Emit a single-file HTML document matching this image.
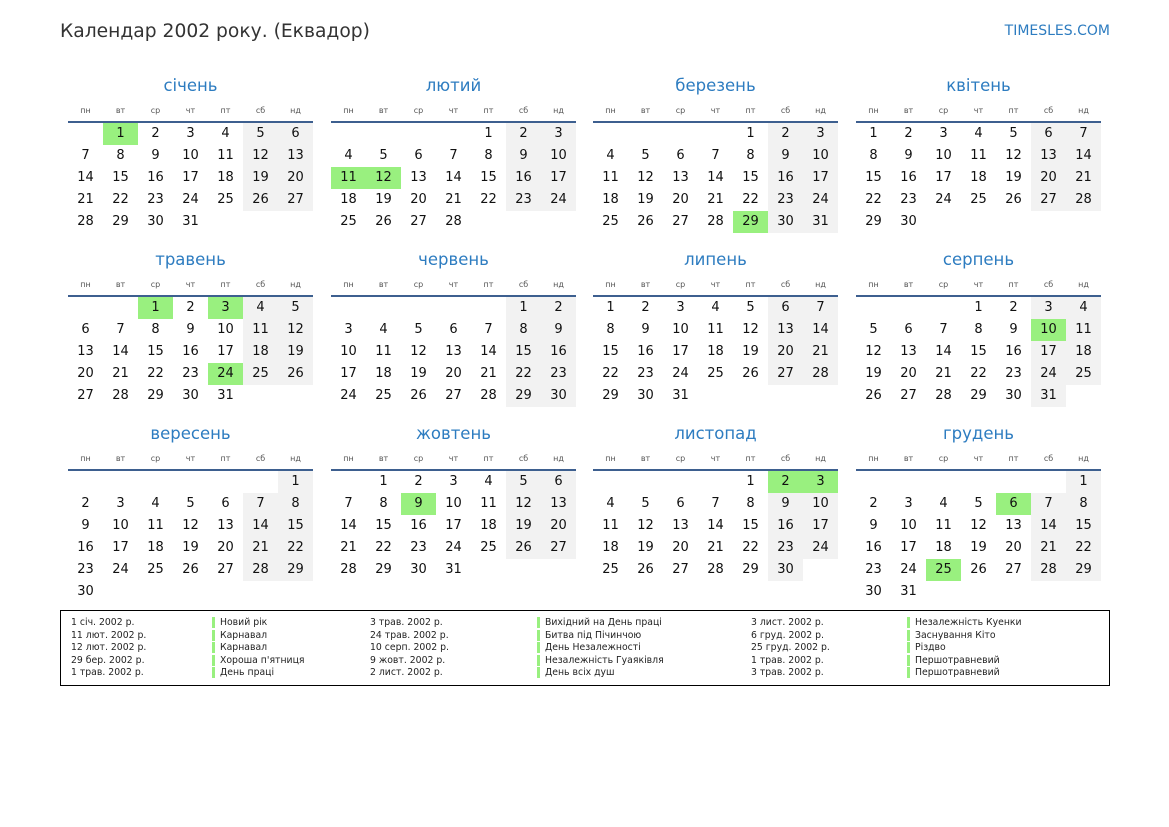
<!DOCTYPE html><html><head><meta charset="utf-8"><style>
body{margin:0;width:1169px;height:827px;background:#fff;font-family:"DejaVu Sans","Liberation Sans",sans-serif;position:relative;overflow:hidden}
.t{position:absolute;left:60px;top:21px;font-size:18.7px;color:#333}
.w{position:absolute;right:59px;top:23px;font-size:14px;color:#2d7cc0}
.m{position:absolute;width:245px}
.m h2{margin:0;height:30px;line-height:30px;text-align:center;font-weight:normal;font-size:16.5px;color:#2d7cc0}
.hd{display:grid;grid-template-columns:repeat(7,35px);height:20px;line-height:20px;font-size:8px;color:#555;text-align:center;border-bottom:2px solid #3d5f8f}
.g{display:grid;grid-template-columns:repeat(7,35px);grid-auto-rows:22px}
.g i{font-style:normal;font-size:13px;line-height:22px;text-align:center;color:#111}
.o0 i:nth-child(7n+6),.o0 i:nth-child(7n+7),.o1 i:nth-child(7n+5),.o1 i:nth-child(7n+6),.o2 i:nth-child(7n+4),.o2 i:nth-child(7n+5),.o3 i:nth-child(7n+3),.o3 i:nth-child(7n+4),.o4 i:nth-child(7n+2),.o4 i:nth-child(7n+3),.o5 i:nth-child(7n+1),.o5 i:nth-child(7n+2),.o6 i:nth-child(7n+7),.o6 i:nth-child(7n+1){background:#f2f2f2}
.g i.h{background:#99f07f!important}
.o1 i:first-child{grid-column-start:2}.o2 i:first-child{grid-column-start:3}.o3 i:first-child{grid-column-start:4}.o4 i:first-child{grid-column-start:5}.o5 i:first-child{grid-column-start:6}.o6 i:first-child{grid-column-start:7}
.lg{position:absolute;left:60px;top:610px;width:1048px;height:74px;border:1px solid #000;font-size:9.3px;color:#222}
.lg div{position:absolute;top:6px;line-height:12.6px;white-space:nowrap}
.b span{display:block;border-left:3px solid #99f07f;padding-left:5px;height:11px;line-height:11px;margin-bottom:1.6px}
</style></head><body>
<div class="t">Календар 2002 року. (Еквадор)</div>
<div class="w">TIMESLES.COM</div>

<div class="m" style="left:68px;top:71px"><h2>січень</h2><div class="hd"><span>пн</span><span>вт</span><span>ср</span><span>чт</span><span>пт</span><span>сб</span><span>нд</span></div>
<div class="g o1"><i class="h">1</i><i>2</i><i>3</i><i>4</i><i>5</i><i>6</i><i>7</i><i>8</i><i>9</i><i>10</i><i>11</i><i>12</i><i>13</i><i>14</i><i>15</i><i>16</i><i>17</i><i>18</i><i>19</i><i>20</i><i>21</i><i>22</i><i>23</i><i>24</i><i>25</i><i>26</i><i>27</i><i>28</i><i>29</i><i>30</i><i>31</i></div></div>

<div class="m" style="left:331px;top:71px"><h2>лютий</h2><div class="hd"><span>пн</span><span>вт</span><span>ср</span><span>чт</span><span>пт</span><span>сб</span><span>нд</span></div>
<div class="g o4"><i>1</i><i>2</i><i>3</i><i>4</i><i>5</i><i>6</i><i>7</i><i>8</i><i>9</i><i>10</i><i class="h">11</i><i class="h">12</i><i>13</i><i>14</i><i>15</i><i>16</i><i>17</i><i>18</i><i>19</i><i>20</i><i>21</i><i>22</i><i>23</i><i>24</i><i>25</i><i>26</i><i>27</i><i>28</i></div></div>

<div class="m" style="left:593px;top:71px"><h2>березень</h2><div class="hd"><span>пн</span><span>вт</span><span>ср</span><span>чт</span><span>пт</span><span>сб</span><span>нд</span></div>
<div class="g o4"><i>1</i><i>2</i><i>3</i><i>4</i><i>5</i><i>6</i><i>7</i><i>8</i><i>9</i><i>10</i><i>11</i><i>12</i><i>13</i><i>14</i><i>15</i><i>16</i><i>17</i><i>18</i><i>19</i><i>20</i><i>21</i><i>22</i><i>23</i><i>24</i><i>25</i><i>26</i><i>27</i><i>28</i><i class="h">29</i><i>30</i><i>31</i></div></div>

<div class="m" style="left:856px;top:71px"><h2>квітень</h2><div class="hd"><span>пн</span><span>вт</span><span>ср</span><span>чт</span><span>пт</span><span>сб</span><span>нд</span></div>
<div class="g o0"><i>1</i><i>2</i><i>3</i><i>4</i><i>5</i><i>6</i><i>7</i><i>8</i><i>9</i><i>10</i><i>11</i><i>12</i><i>13</i><i>14</i><i>15</i><i>16</i><i>17</i><i>18</i><i>19</i><i>20</i><i>21</i><i>22</i><i>23</i><i>24</i><i>25</i><i>26</i><i>27</i><i>28</i><i>29</i><i>30</i></div></div>

<div class="m" style="left:68px;top:245px"><h2>травень</h2><div class="hd"><span>пн</span><span>вт</span><span>ср</span><span>чт</span><span>пт</span><span>сб</span><span>нд</span></div>
<div class="g o2"><i class="h">1</i><i>2</i><i class="h">3</i><i>4</i><i>5</i><i>6</i><i>7</i><i>8</i><i>9</i><i>10</i><i>11</i><i>12</i><i>13</i><i>14</i><i>15</i><i>16</i><i>17</i><i>18</i><i>19</i><i>20</i><i>21</i><i>22</i><i>23</i><i class="h">24</i><i>25</i><i>26</i><i>27</i><i>28</i><i>29</i><i>30</i><i>31</i></div></div>

<div class="m" style="left:331px;top:245px"><h2>червень</h2><div class="hd"><span>пн</span><span>вт</span><span>ср</span><span>чт</span><span>пт</span><span>сб</span><span>нд</span></div>
<div class="g o5"><i>1</i><i>2</i><i>3</i><i>4</i><i>5</i><i>6</i><i>7</i><i>8</i><i>9</i><i>10</i><i>11</i><i>12</i><i>13</i><i>14</i><i>15</i><i>16</i><i>17</i><i>18</i><i>19</i><i>20</i><i>21</i><i>22</i><i>23</i><i>24</i><i>25</i><i>26</i><i>27</i><i>28</i><i>29</i><i>30</i></div></div>

<div class="m" style="left:593px;top:245px"><h2>липень</h2><div class="hd"><span>пн</span><span>вт</span><span>ср</span><span>чт</span><span>пт</span><span>сб</span><span>нд</span></div>
<div class="g o0"><i>1</i><i>2</i><i>3</i><i>4</i><i>5</i><i>6</i><i>7</i><i>8</i><i>9</i><i>10</i><i>11</i><i>12</i><i>13</i><i>14</i><i>15</i><i>16</i><i>17</i><i>18</i><i>19</i><i>20</i><i>21</i><i>22</i><i>23</i><i>24</i><i>25</i><i>26</i><i>27</i><i>28</i><i>29</i><i>30</i><i>31</i></div></div>

<div class="m" style="left:856px;top:245px"><h2>серпень</h2><div class="hd"><span>пн</span><span>вт</span><span>ср</span><span>чт</span><span>пт</span><span>сб</span><span>нд</span></div>
<div class="g o3"><i>1</i><i>2</i><i>3</i><i>4</i><i>5</i><i>6</i><i>7</i><i>8</i><i>9</i><i class="h">10</i><i>11</i><i>12</i><i>13</i><i>14</i><i>15</i><i>16</i><i>17</i><i>18</i><i>19</i><i>20</i><i>21</i><i>22</i><i>23</i><i>24</i><i>25</i><i>26</i><i>27</i><i>28</i><i>29</i><i>30</i><i>31</i></div></div>

<div class="m" style="left:68px;top:419px"><h2>вересень</h2><div class="hd"><span>пн</span><span>вт</span><span>ср</span><span>чт</span><span>пт</span><span>сб</span><span>нд</span></div>
<div class="g o6"><i>1</i><i>2</i><i>3</i><i>4</i><i>5</i><i>6</i><i>7</i><i>8</i><i>9</i><i>10</i><i>11</i><i>12</i><i>13</i><i>14</i><i>15</i><i>16</i><i>17</i><i>18</i><i>19</i><i>20</i><i>21</i><i>22</i><i>23</i><i>24</i><i>25</i><i>26</i><i>27</i><i>28</i><i>29</i><i style="background:#fff">30</i></div></div>

<div class="m" style="left:331px;top:419px"><h2>жовтень</h2><div class="hd"><span>пн</span><span>вт</span><span>ср</span><span>чт</span><span>пт</span><span>сб</span><span>нд</span></div>
<div class="g o1"><i>1</i><i>2</i><i>3</i><i>4</i><i>5</i><i>6</i><i>7</i><i>8</i><i class="h">9</i><i>10</i><i>11</i><i>12</i><i>13</i><i>14</i><i>15</i><i>16</i><i>17</i><i>18</i><i>19</i><i>20</i><i>21</i><i>22</i><i>23</i><i>24</i><i>25</i><i>26</i><i>27</i><i>28</i><i>29</i><i>30</i><i>31</i></div></div>

<div class="m" style="left:593px;top:419px"><h2>листопад</h2><div class="hd"><span>пн</span><span>вт</span><span>ср</span><span>чт</span><span>пт</span><span>сб</span><span>нд</span></div>
<div class="g o4"><i>1</i><i class="h">2</i><i class="h">3</i><i>4</i><i>5</i><i>6</i><i>7</i><i>8</i><i>9</i><i>10</i><i>11</i><i>12</i><i>13</i><i>14</i><i>15</i><i>16</i><i>17</i><i>18</i><i>19</i><i>20</i><i>21</i><i>22</i><i>23</i><i>24</i><i>25</i><i>26</i><i>27</i><i>28</i><i>29</i><i>30</i></div></div>

<div class="m" style="left:856px;top:419px"><h2>грудень</h2><div class="hd"><span>пн</span><span>вт</span><span>ср</span><span>чт</span><span>пт</span><span>сб</span><span>нд</span></div>
<div class="g o6"><i>1</i><i>2</i><i>3</i><i>4</i><i>5</i><i class="h">6</i><i>7</i><i>8</i><i>9</i><i>10</i><i>11</i><i>12</i><i>13</i><i>14</i><i>15</i><i>16</i><i>17</i><i>18</i><i>19</i><i>20</i><i>21</i><i>22</i><i>23</i><i>24</i><i class="h">25</i><i>26</i><i>27</i><i>28</i><i>29</i><i style="background:#fff">30</i><i>31</i></div></div>

<div class="lg">
<div style="left:10px">1 січ. 2002 р.<br>11 лют. 2002 р.<br>12 лют. 2002 р.<br>29 бер. 2002 р.<br>1 трав. 2002 р.</div>
<div class="b" style="left:151px"><span>Новий рік</span><span>Карнавал</span><span>Карнавал</span><span>Хороша п'ятниця</span><span>День праці</span></div>
<div style="left:309px">3 трав. 2002 р.<br>24 трав. 2002 р.<br>10 серп. 2002 р.<br>9 жовт. 2002 р.<br>2 лист. 2002 р.</div>
<div class="b" style="left:476px"><span>Вихідний на День праці</span><span>Битва під Пічинчою</span><span>День Незалежності</span><span>Незалежність Гуаяківля</span><span>День всіх душ</span></div>
<div style="left:690px">3 лист. 2002 р.<br>6 груд. 2002 р.<br>25 груд. 2002 р.<br>1 трав. 2002 р.<br>3 трав. 2002 р.</div>
<div class="b" style="left:846px"><span>Незалежність Куенки</span><span>Заснування Кіто</span><span>Різдво</span><span>Першотравневий</span><span>Першотравневий</span></div>
</div>
</body></html>
